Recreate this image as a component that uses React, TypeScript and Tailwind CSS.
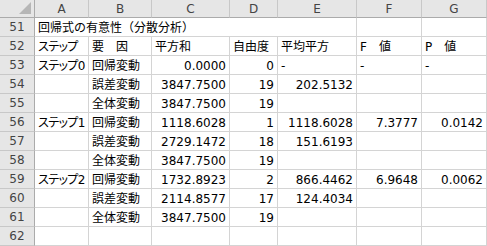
import React from "react";

const cols = ["A", "B", "C", "D", "E", "F", "G"];

type Cell = { t: string; r?: boolean; p?: boolean };

const rows: { n: number; cells: Cell[] }[] = [
  { n: 51, cells: [{ t: "回帰式の有意性（分散分析）" }, { t: "" }, { t: "" }, { t: "" }, { t: "" }, { t: "" }, { t: "" }] },
  { n: 52, cells: [{ t: "ステップ", p: true }, { t: "要　因" }, { t: "平方和" }, { t: "自由度" }, { t: "平均平方" }, { t: "F　値" }, { t: "P　値" }] },
  { n: 53, cells: [{ t: "ステップ0", p: true }, { t: "回帰変動" }, { t: "0.0000", r: true }, { t: "0", r: true }, { t: "-" }, { t: "-" }, { t: "-" }] },
  { n: 54, cells: [{ t: "" }, { t: "誤差変動" }, { t: "3847.7500", r: true }, { t: "19", r: true }, { t: "202.5132", r: true }, { t: "" }, { t: "" }] },
  { n: 55, cells: [{ t: "" }, { t: "全体変動" }, { t: "3847.7500", r: true }, { t: "19", r: true }, { t: "" }, { t: "" }, { t: "" }] },
  { n: 56, cells: [{ t: "ステップ1", p: true }, { t: "回帰変動" }, { t: "1118.6028", r: true }, { t: "1", r: true }, { t: "1118.6028", r: true }, { t: "7.3777", r: true }, { t: "0.0142", r: true }] },
  { n: 57, cells: [{ t: "" }, { t: "誤差変動" }, { t: "2729.1472", r: true }, { t: "18", r: true }, { t: "151.6193", r: true }, { t: "" }, { t: "" }] },
  { n: 58, cells: [{ t: "" }, { t: "全体変動" }, { t: "3847.7500", r: true }, { t: "19", r: true }, { t: "" }, { t: "" }, { t: "" }] },
  { n: 59, cells: [{ t: "ステップ2", p: true }, { t: "回帰変動" }, { t: "1732.8923", r: true }, { t: "2", r: true }, { t: "866.4462", r: true }, { t: "6.9648", r: true }, { t: "0.0062", r: true }] },
  { n: 60, cells: [{ t: "" }, { t: "誤差変動" }, { t: "2114.8577", r: true }, { t: "17", r: true }, { t: "124.4034", r: true }, { t: "" }, { t: "" }] },
  { n: 61, cells: [{ t: "" }, { t: "全体変動" }, { t: "3847.7500", r: true }, { t: "19", r: true }, { t: "" }, { t: "" }, { t: "" }] },
  { n: 62, cells: [{ t: "" }, { t: "" }, { t: "" }, { t: "" }, { t: "" }, { t: "" }, { t: "" }] },
];

const font = { fontFamily: '"DejaVu Sans", "Noto Sans CJK JP", sans-serif' };

export default function App() {
  return (
    <div
      className="w-[487px] h-[246px] bg-white overflow-hidden grid grid-cols-[35px_54px_63px_78px_48px_79px_65px_65px] grid-rows-[18px_repeat(12,19px)] text-[12px] text-black"
      style={font}
    >
      {/* corner */}
      <div className="relative bg-[#e6e6e6] border-r border-b border-[#ababab]">
        <div className="absolute right-[3px] bottom-[3px] w-0 h-0 border-l-[12px] border-l-transparent border-b-[12px] border-b-[#b6b6b6]" />
      </div>
      {cols.map((c) => (
        <div
          key={c}
          className="bg-[#e6e6e6] border-r border-r-[#c8c8c8] border-b border-b-[#ababab] flex items-center justify-center text-[#444] text-[12px] leading-none"
        >
          {c}
        </div>
      ))}
      {rows.map((row) => (
        <React.Fragment key={row.n}>
          <div className="bg-[#e6e6e6] border-r border-r-[#ababab] border-b border-b-[#c8c8c8] flex items-center justify-center text-[#444] leading-none">
            {row.n}
          </div>
          {row.cells.map((cell, i) => {
            const overflow = row.n === 51 && i === 0;
            return (
              <div
                key={i}
                className={`border-b border-[#d4d4d4] flex items-end pb-[2px] leading-none whitespace-nowrap ${
                  overflow ? "overflow-visible z-10" : "overflow-hidden"
                } ${row.n === 51 && i < 4 ? "" : "border-r"} ${
                  cell.r ? "justify-end pr-[3px]" : "justify-start pl-[3px]"
                } ${cell.p ? "[font-feature-settings:'palt'] tracking-[-0.6px]" : ""}`}
              >
                {cell.t}
              </div>
            );
          })}
        </React.Fragment>
      ))}
    </div>
  );
}
